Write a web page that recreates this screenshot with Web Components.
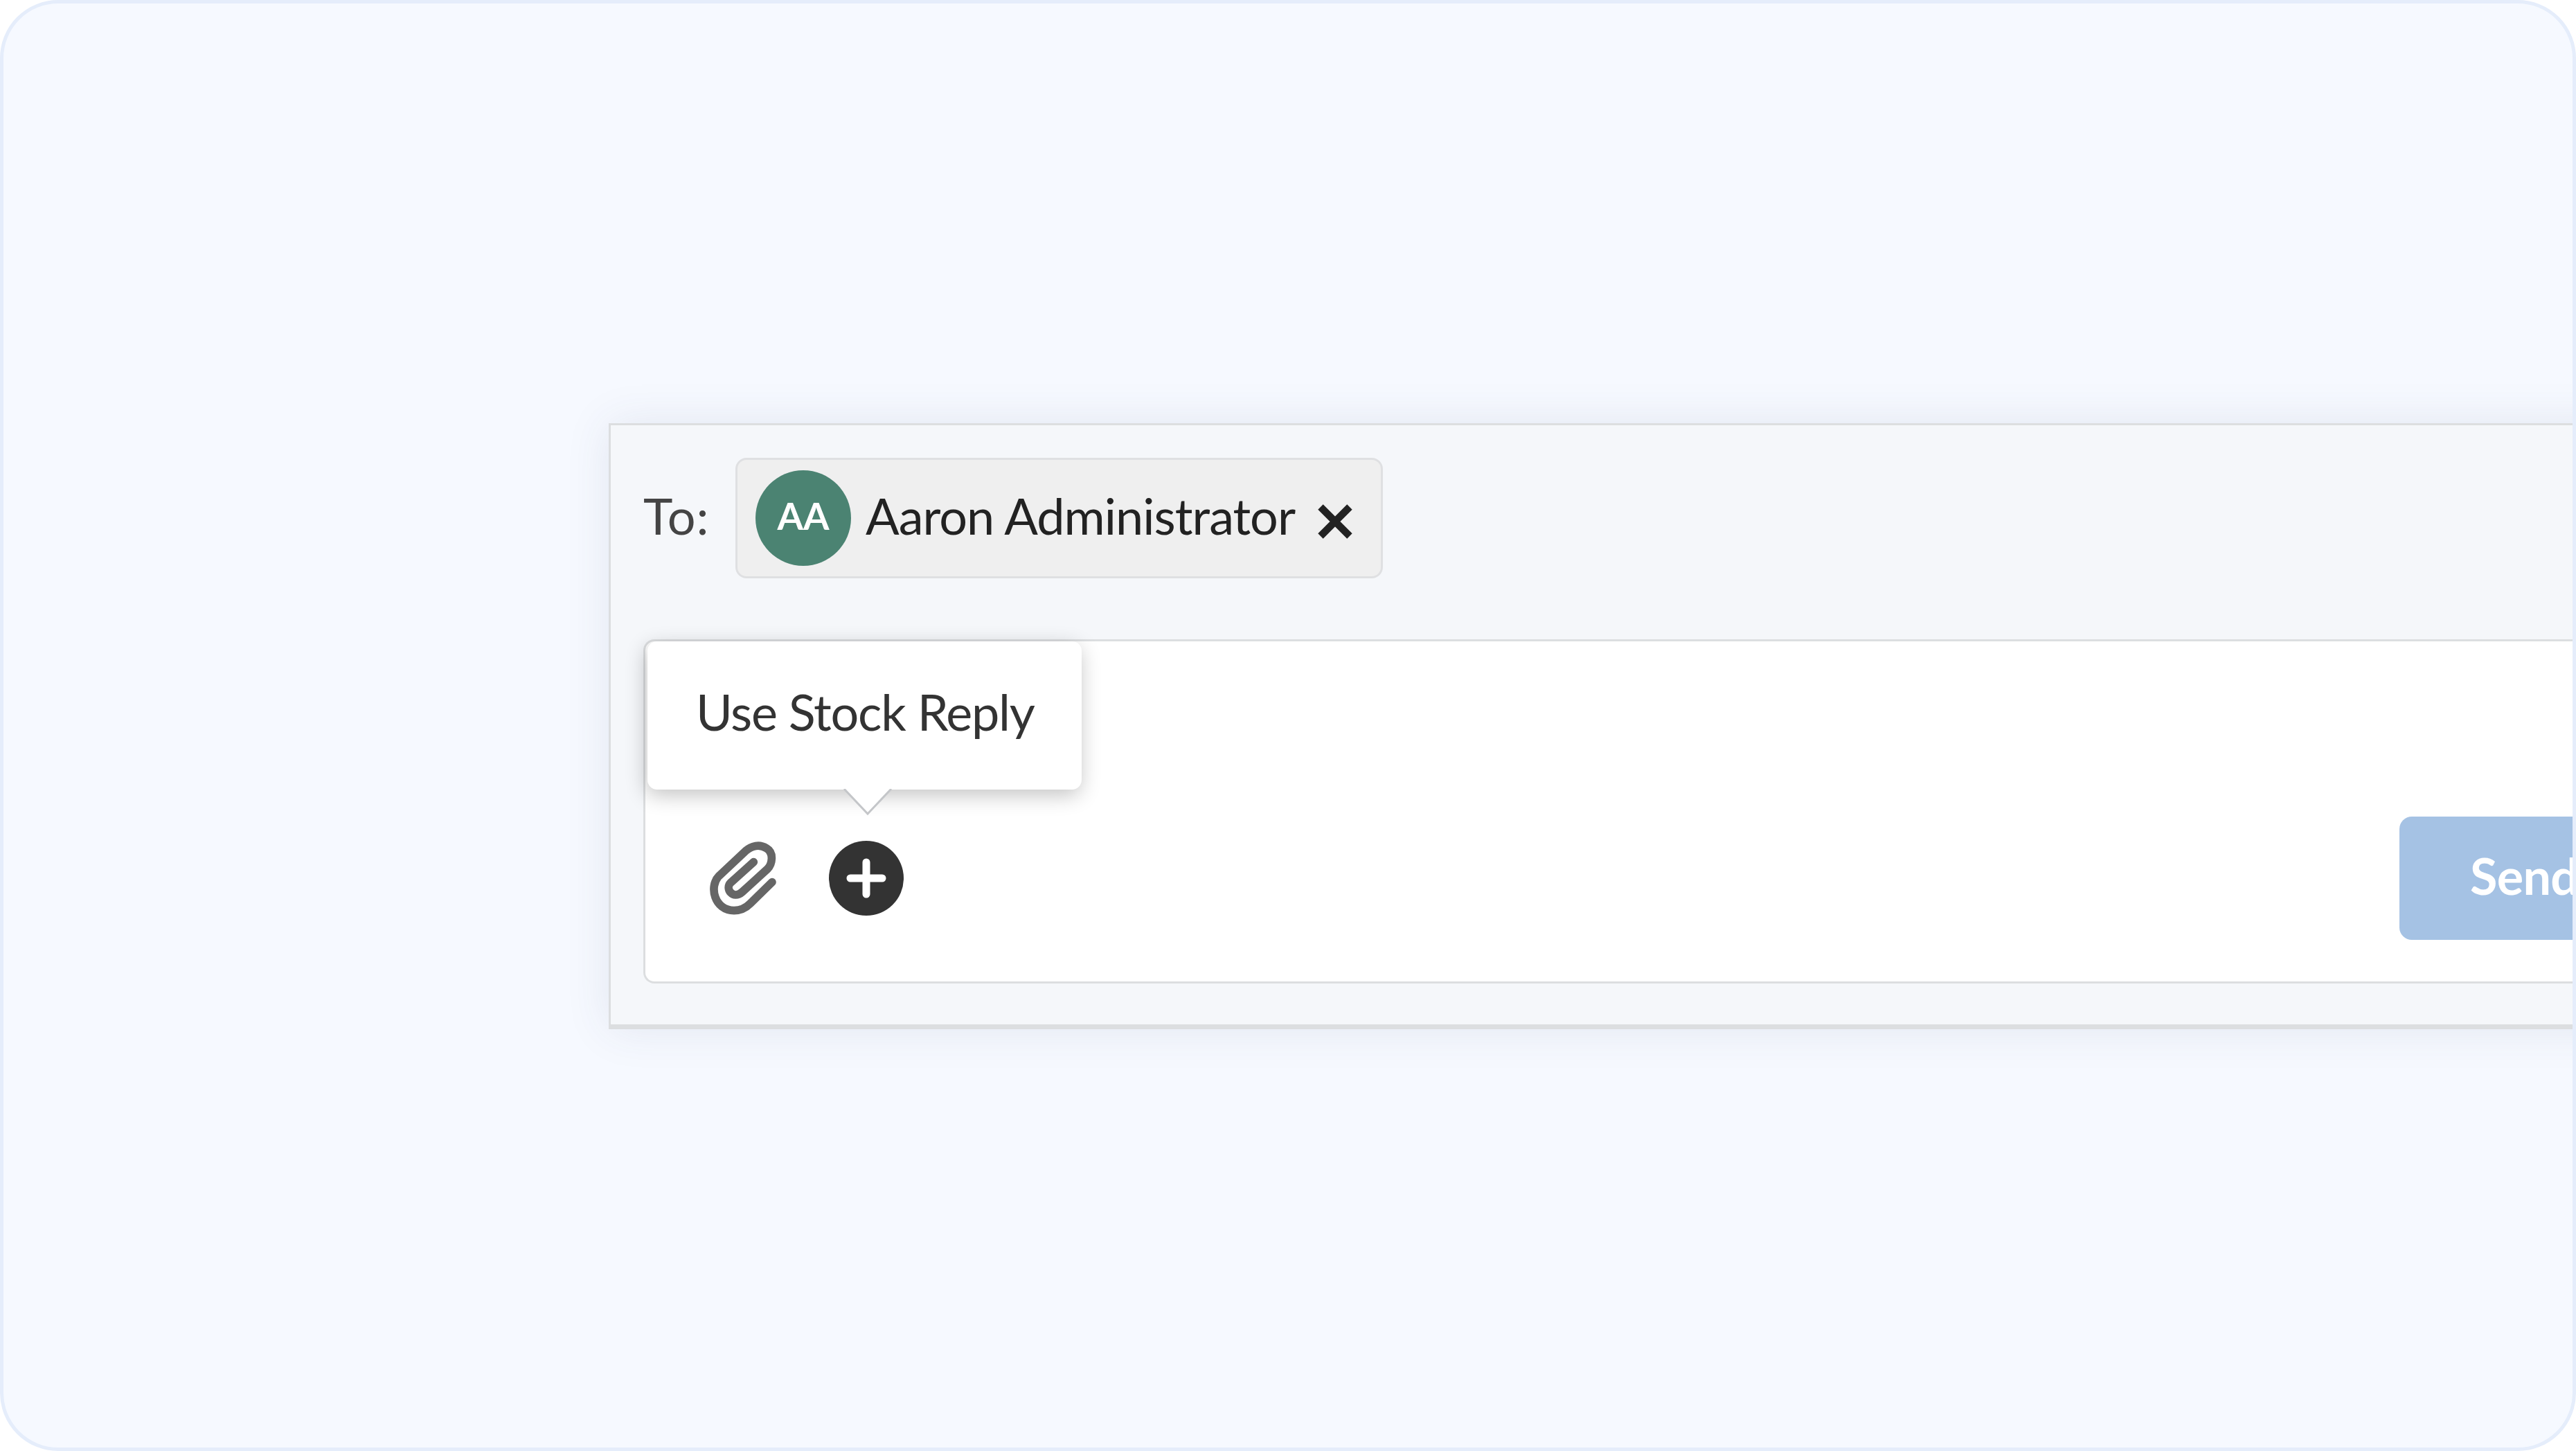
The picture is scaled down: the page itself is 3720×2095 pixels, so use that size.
<!DOCTYPE html>
<html lang="en"><head><meta charset="utf-8"><title>Stock reply</title>
<style>
html,body{margin:0;padding:0;background:#fff;}
body{font-family:Lato,"Liberation Sans",sans-serif;}
</style></head><body>
<app-frame>
  <reply-panel>
    <recipient-row slot="to" label="To:">
      <user-chip initials="AA">Aaron Administrator</user-chip>
    </recipient-row>
    <reply-editor slot="editor">
      <stock-tooltip slot="overlay">Use Stock Reply</stock-tooltip>
      <icon-clip slot="tools"></icon-clip>
      <icon-add slot="tools"></icon-add>
      <send-button slot="action">Send</send-button>
    </reply-editor>
  </reply-panel>
</app-frame>
<script>
function def(name, html){
  customElements.define(name, class extends HTMLElement{
    constructor(){super();
      const r=this.attachShadow({mode:'open'});
      r.innerHTML=html;
    }
    connectedCallback(){
      const r=this.shadowRoot;
      r.querySelectorAll('[data-attr]').forEach(e=>{e.textContent=this.getAttribute(e.dataset.attr)||'';});
    }
  });
}
def('app-frame',`<style>:host{display:block;box-sizing:border-box;width:3720px;height:2095px;background:#f6f9ff;border:5px solid #e5edfb;border-radius:84px;overflow:hidden;padding:606px 0 0 874px}</style><slot></slot>`);
def('reply-panel',`<style>:host{display:block;box-sizing:border-box;width:3100px;background:#f5f7fa;border:3px solid #dcdee0;border-bottom-width:7px;border-right:0;padding:47px 0 59px 47px;box-shadow:0 0 60px rgba(60,70,110,.1)}
.s{display:block;margin-top:88px}</style><slot name="to"></slot><div class="s"><slot name="editor"></slot></div>`);
def('recipient-row',`<style>:host{display:flex;align-items:center}
.l{font-size:72px;letter-spacing:1px;line-height:88px;color:#444;margin-top:-9px;width:133px;flex:none}</style><span class="l" data-attr="label"></span><slot></slot>`);
def('user-chip',`<style>:host{display:inline-flex;align-items:center;box-sizing:border-box;height:174px;width:935px;background:#efefef;border:3px solid #dfe0e2;border-radius:16px;padding-left:26px;color:#222}
.a{width:138px;height:138px;border-radius:50%;background:#4b8372;color:#fff;display:flex;align-items:center;justify-content:center;font-weight:700;font-size:54px;margin-right:21px;padding-bottom:8px;box-sizing:border-box;flex:none}
.n{font-size:72px;letter-spacing:-1px;line-height:88px;margin-top:-9px;white-space:nowrap;width:653px;flex:none}
svg{margin-top:10px;flex:none}</style>
<span class="a" data-attr="initials"></span><span class="n"><slot></slot></span>
<svg width="50" height="50" viewBox="0 0 50 50"><path d="M4 4 46 46M46 4 4 46" fill="none" stroke="#222" stroke-width="10.5"/></svg>`);
def('reply-editor',`<style>:host{display:flex;position:relative;box-sizing:border-box;height:497px;background:#fff;border:3px solid #dcdee0;border-radius:16px;border-right:0;align-items:flex-end;padding:0 0 60px 90px}
.t{display:flex;align-items:center;gap:75px;height:178px;width:2443px;flex:none}</style>
<div class="t"><slot name="tools"></slot></div><slot name="action"></slot><slot name="overlay"></slot>`);
def('stock-tooltip',`<style>:host{position:absolute;left:3px;top:0;box-sizing:border-box;width:627px;height:214px;background:#fff;border-radius:14px;box-shadow:-2px 8px 30px rgba(0,0,0,.24);font-size:72px;color:#333;display:flex;align-items:center;padding:0 0 12px 70px;white-space:nowrap;letter-spacing:-1.25px}
svg{position:absolute;left:282px;top:213px}</style><slot></slot>
<svg width="72" height="38" viewBox="0 0 72 38"><path d="M2 0 36 36 70 0Z" fill="#fff"/><path d="M2 0 36 36 70 0" fill="none" stroke="#c4c6c9" stroke-width="3"/></svg>`);
def('icon-clip',`<style>:host{display:block;width:100px;height:112px;flex:none}svg{display:block}</style>
<svg width="100" height="112" viewBox="366 342 300 336"><path d="M565 440 465 530C440 555 475 605 515 570L625 470C645 450 655 400 620 380 590 360 555 370 530 392L415 500C370 545 395 650 480 650 510 650 530 640 550 620L645 527" fill="none" stroke="#666" stroke-width="35" stroke-linecap="round" stroke-linejoin="round"/></svg>`);
def('icon-add',`<style>:host{display:block;width:108px;height:108px;flex:none}svg{display:block}</style>
<svg width="108" height="108" viewBox="0 0 108 108"><circle cx="54" cy="54" r="54" fill="#333"/><path d="M54 31V77M31 54H77" stroke="#fff" stroke-width="11" stroke-linecap="round"/></svg>`);
def('send-button',`<style>:host{display:flex;align-items:center;box-sizing:border-box;height:178px;width:420px;flex:none;background:#a5c2e4;border-radius:18px;color:#fff;font-weight:700;font-size:72px;letter-spacing:-.7px;padding:0 0 8px 102px;white-space:nowrap}</style><slot></slot>`);
</script>
</body></html>
